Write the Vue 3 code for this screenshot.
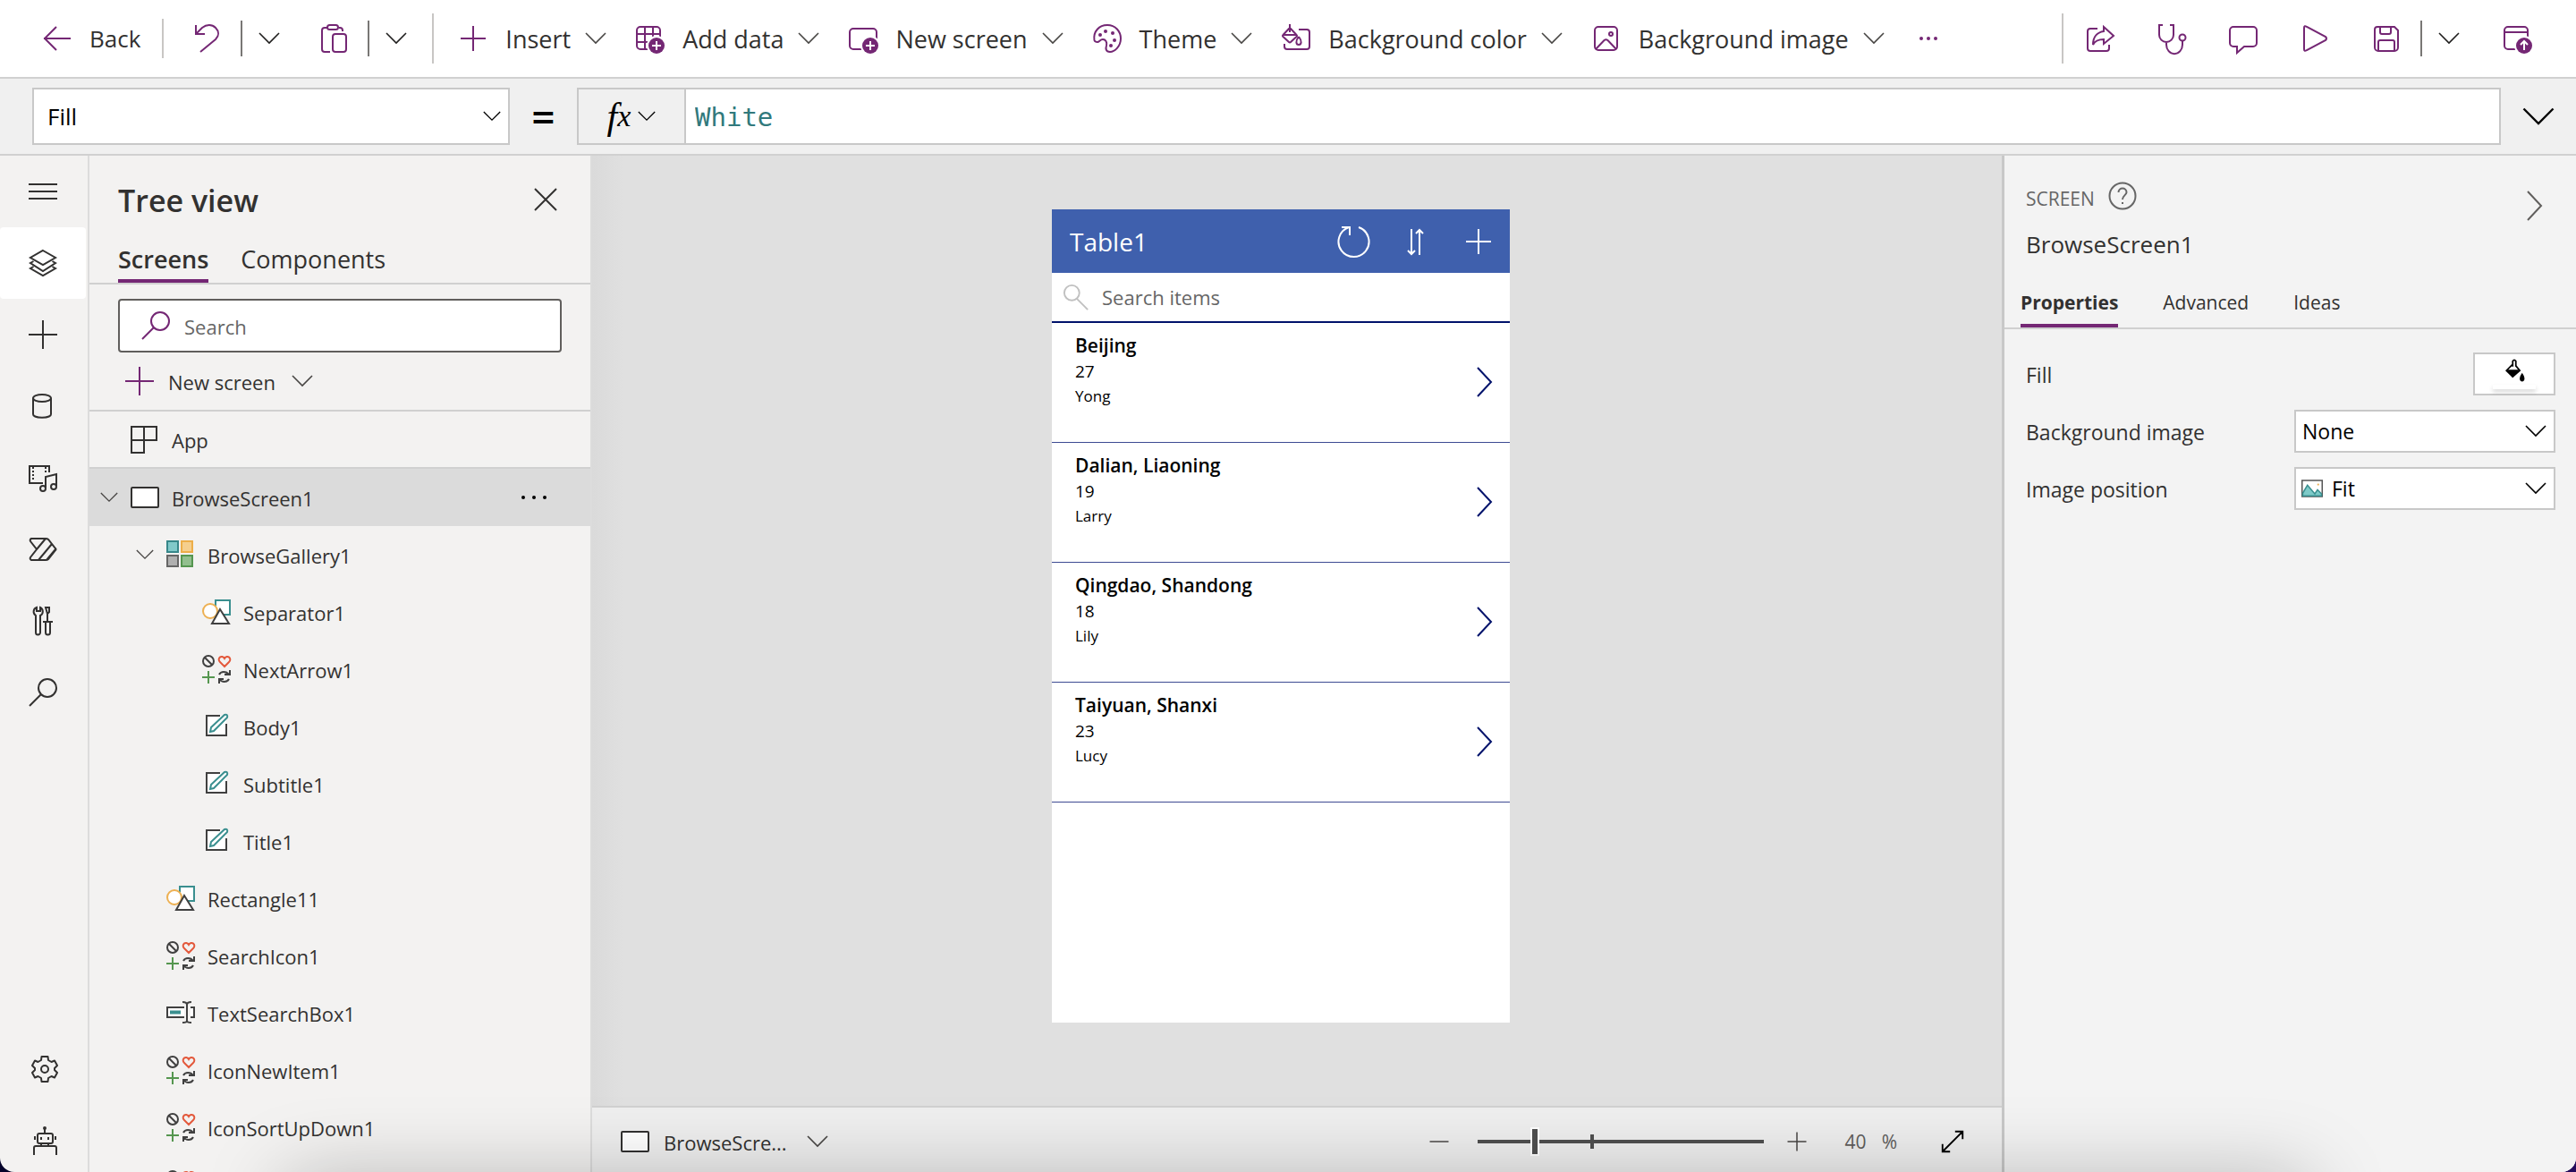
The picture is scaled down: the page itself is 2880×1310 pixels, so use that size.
<script setup>
import { h, ref } from 'vue'

const badge = '<circle cx="23" cy="24" r="11" fill="#fff" stroke="none"/><circle cx="23" cy="24" r="9" fill="#742774" stroke="none"/>'
const badgePlus = badge + '<path d="M23 19v10M18 24h10" stroke="#fff"/>'

const glyphs = {
  back: '<path d="M1 16H31M15 3 2 16 15 29"/>',
  undo: '<path d="M4 1V11H14M4 11 11 4C16 0 22 0 26 4C30 8 30 13 26 17L9 31"/>',
  paste: '<path d="M10 4H6a3 3 0 0 0-3 3V28a3 3 0 0 0 3 3h6M22 4h1a3 3 0 0 1 3 3v1"/><rect x="9" y="1" width="12" height="5" rx="2.5"/><rect x="15" y="11" width="15" height="20" rx="3"/>',
  plus: '<path d="M16 2V30M2 16H30"/>',
  bigPlus: '<path d="M16 0V32M0 16H32"/>',
  addData: '<rect x="1" y="3" width="26" height="25" rx="4"/><path d="M10 3V28M19 3V28M1 11H27M1 20H27"/>' + badgePlus,
  newScreen: '<rect x="1" y="5" width="30" height="23" rx="4"/><g transform="translate(1 0)">' + badgePlus + '</g>',
  theme: '<path d="M1.500 18C0 8 7 1 16 1C25 1 31 8 31 16C31 25 24 31 19 31C14 31 14 27 15 24C16 20 14 17 11 17C8 17 7 20 5 20C3 20 2 19.500 1.500 18Z"/><g fill="currentColor" stroke="none"><circle cx="8" cy="12" r="2"/><circle cx="14" cy="8" r="2"/><circle cx="22" cy="10" r="2"/><circle cx="24" cy="18" r="2"/><circle cx="20" cy="24" r="2"/></g>',
  bgColor: '<path d="M19 6H28a3 3 0 0 1 3 3V25a3 3 0 0 1-3 3H6a3 3 0 0 1-3-3V22M9 0V9M9 4 1.500 12q-1 1 0 2L8 20q1 1 2 0l6.500-6q1-1 0-2ZM1 12H17M19 14c4 5 3 9 0 9s-4-4 0-9"/>',
  image: '<rect x="3" y="3" width="25" height="26" rx="4"/><circle cx="21" cy="11" r="2"/><path d="M4 28 13.500 18q2-1.500 4 0L27 28"/>',
  more: '<g fill="currentColor" stroke="none"><circle cx="8" cy="16" r="2"/><circle cx="16" cy="16" r="2"/><circle cx="24" cy="16" r="2"/></g>',
  share: '<path d="M13 5H5a3 3 0 0 0-3 3V27a3 3 0 0 0 3 3H23a3 3 0 0 0 3-3V23M20 3 31 13 20 22V17C14 17 10 19 8 23C8 14 13 9 20 8Z"/>',
  stethoscope: '<path d="M6 1H2V12a8 8 0 0 0 16 0V1H14M10 20v3a8 9 0 0 0 18 0V19"/><circle cx="28" cy="15" r="3.500"/>',
  comment: '<path d="M5 3H27a4 4 0 0 1 4 4V21a4 4 0 0 1-4 4H17L9 32V25H5a4 4 0 0 1-4-4V7a4 4 0 0 1 4-4Z"/>',
  play: '<path d="M4 4V28q0 3 3 1L28 18q2-2 0-4L7 3Q4 1 4 4Z"/>',
  save: '<path d="M6 3H25l4 4V26a4 4 0 0 1-4 4H7a4 4 0 0 1-4-4V6a3 3 0 0 1 3-3ZM9 3V9a2 2 0 0 0 2 2h8a2 2 0 0 0 2-2V3M7 30V20a2 2 0 0 1 2-2H23a2 2 0 0 1 2 2V30"/>',
  publish: '<path d="M28 15V7a4 4 0 0 0-4-4H6a4 4 0 0 0-4 4V24a4 4 0 0 0 4 4h9M2 9H28"/><g transform="translate(1 0)">' + badge + '<path d="M23 29V20M19 23l4-4 4 4" stroke="#fff"/></g>',
  menu: '<path d="M0 8H32M0 16H32M0 24H32"/>',
  layers: '<path d="M16 2 30 10 16 18 2 10ZM5.500 14 2 16 16 25 30 16 26.500 14M5.500 20 2 22 16 30 30 22 26.500 20"/>',
  database: '<ellipse cx="15" cy="7" rx="10" ry="4"/><path d="M5 7V25c0 5 20 5 20 0V7"/>',
  media: '<path d="M16 22H1V3H23V10M19 27V15L31 12V25"/><path d="M5 4V20M19 4V12" stroke-dasharray="2 2"/><circle cx="16" cy="28" r="3"/><circle cx="28" cy="26" r="3"/>',
  automate: '<path d="M3 4H19q2 0 3 1L30 15q1 1 0 2L22 27q-1 1-3 1H3q-2-1-1-3L9 16 2 7Q1 5 3 4ZM9 16 19 4M11 28 26 10M20 28 30 16"/>',
  tools: '<path d="M9 1A5 5 0 0 0 8 10V29a2.500 2.500 0 0 0 5 0V10A5 5 0 0 0 13 1V5H9ZM19 1H23V6L21 8ZM21 7V17M16 17H27M19 17V29a2.500 2.500 0 0 0 5 0V17"/>',
  search: '<circle cx="21" cy="11" r="10"/><path d="M14 18 1 31"/>',
  gear: '<circle cx="18" cy="16" r="4"/><path d="M14.500 2H21.500L22 6 25.500 8 29 6.500 32 12 29 15V17L32 20 29 25.500 25.500 24 22 26 21.500 30H14.500L14 26 10.500 24 7 25.500 4 20 7 17V15L4 12 7 6.500 10.500 8 14 6Z" stroke-linejoin="round"/>',
  robot: '<rect x="10" y="8" width="17" height="11" rx="2"/><path d="M18 2V8M7 11V15M30 11V15M14 19V22M22 19V22M6 32V24q0-2 2-2H29q2 0 2 2V32"/><circle cx="18" cy="2" r="1"/><path d="M14 12v3M22 12v3"/>',
  app: '<path d="M1 2H29V17H15V31H1ZM1 17H15V2"/>',
  screen: '<rect x="1" y="5" width="30" height="22" rx="1" fill="#fff"/>',
  gallery: '<rect x="1" y="1" width="12" height="12" fill="#81c9ca" stroke="#37878a"/><rect x="17" y="1" width="12" height="12" fill="#f5cf8e" stroke="#edae49"/><rect x="1" y="17" width="12" height="12" fill="#b0b0b0" stroke="#666"/><rect x="17" y="17" width="12" height="12" fill="#92bf8e" stroke="#55964f"/>',
  shapes: '<rect x="15" y="3" width="16" height="16" fill="#fff" stroke="#3a8f8f"/><circle cx="9" cy="15" r="8" fill="#fff" stroke="#edb052"/><path d="M20 13 30 29H11Z" fill="#fff" stroke="#404040"/>',
  icons: '<g stroke="#404040"><circle cx="7" cy="7" r="6"/><path d="M3 3 11 11M19 22c2-4 8-4 11 0M31 17V22H25M30 27c-2 4-8 4-11 0M19 32V27H24"/></g><path d="M25 13 20 8C16 4 22 -1 25 4C28 -1 34 4 30 8Z" stroke="#e3593c"/><path d="M7 18V32M0 25H14" stroke="#55964f"/>',
  edit: '<path d="M5 4H27V26H5Z" fill="#fff" stroke="none"/><path d="M27 13V26H5V4H20" stroke="#404040"/><path d="M9 22 10 17 25 3Q29 2 28 6L13 21Z" fill="#fff" stroke="#3a8f8f"/>',
  textBox: '<path d="M20 10H1V21H20M27 10H31V21H27" fill="#fff" stroke="#404040"/><path d="M4 15.500H16" stroke="#3a8f8f" stroke-width="4"/><path d="M18 4Q23 4 23 7V25Q23 27 18 27M28 4Q23 4 23 7M23 25Q23 27 28 27" stroke="#404040"/>',
  close: '<path d="M4 3 28 27M28 3 4 27"/>',
  help: '<circle cx="16" cy="16" r="14.500"/><path d="M11.500 12C11.500 6 20.500 6 20.500 12C20.500 15 16 15.500 16 20M16 23V25"/>',
  refresh: '<path d="M22 0A17 17 0 1 1 11 0M3 0H12V9"/>',
  sort: '<path d="M11 2V30M7 26 11 30 15 26M20 31V3M16 7 20 3 24 7"/>',
  searchThin: '<circle cx="11" cy="11" r="9"/><path d="M17 18 30 31"/>',
  bucket: '<path d="M14 10V3q2-3 4 0V10M14 7 6 15 14 23 23 15 18 9"/><path d="M6 14H23L14 24Z" fill="currentColor" stroke="none"/><path d="M26 18c5 7 3 11 0 11s-5-4 0-11Z" fill="currentColor" stroke="none"/>',
  picture: '<rect x="1" y="4" width="30" height="24" fill="#fff" stroke="#555"/><path d="M2 23 9 11 20 24 24 18 30 24V27H2Z" fill="#7ecac8" stroke="#3a8f8f"/><circle cx="25" cy="10" r="1.500" fill="#edb052" stroke="none"/>',
  expand: '<path d="M4 28 28 4M19 4H28V13M4 19V28H13"/>',
  minus: '<path d="M2 16H30"/>'
}

const Icon = (props) =>
  h('svg', {
    viewBox: '0 0 32 32',
    fill: 'none',
    stroke: 'currentColor',
    'stroke-width': 2,
    'aria-hidden': 'true',
    class: 'icon',
    innerHTML: glyphs[props.name]
  })
Icon.props = ['name']

const Chevron = () =>
  h('svg', {
    viewBox: '0 0 24 14',
    fill: 'none',
    stroke: 'currentColor',
    'stroke-width': 1.6,
    'aria-hidden': 'true',
    class: 'chevron',
    innerHTML: '<path d="M1 1 12 12 23 1"/>'
  })

const commands = [
  { icon: 'plus', label: 'Insert' },
  { icon: 'addData', label: 'Add data' },
  { icon: 'newScreen', label: 'New screen' },
  { icon: 'theme', label: 'Theme' },
  { icon: 'bgColor', label: 'Background color' },
  { icon: 'image', label: 'Background image' }
]
const appActions = ['share', 'stethoscope', 'comment', 'play', 'save']
const rail = ['menu', 'layers', 'bigPlus', 'database', 'media', 'automate', 'tools', 'search']

const tree = [
  { label: 'App', icon: 'app', level: 0, ruled: true },
  { label: 'BrowseScreen1', icon: 'screen', level: 0, open: true, selected: true },
  { label: 'BrowseGallery1', icon: 'gallery', level: 1, open: true },
  { label: 'Separator1', icon: 'shapes', level: 2 },
  { label: 'NextArrow1', icon: 'icons', level: 2 },
  { label: 'Body1', icon: 'edit', level: 2 },
  { label: 'Subtitle1', icon: 'edit', level: 2 },
  { label: 'Title1', icon: 'edit', level: 2 },
  { label: 'Rectangle11', icon: 'shapes', level: 1 },
  { label: 'SearchIcon1', icon: 'icons', level: 1 },
  { label: 'TextSearchBox1', icon: 'textBox', level: 1 },
  { label: 'IconNewItem1', icon: 'icons', level: 1 },
  { label: 'IconSortUpDown1', icon: 'icons', level: 1 },
  { label: '', icon: 'icons', level: 1 }
]

const records = [
  { title: 'Beijing', subtitle: '27', body: 'Yong' },
  { title: 'Dalian, Liaoning', subtitle: '19', body: 'Larry' },
  { title: 'Qingdao, Shandong', subtitle: '18', body: 'Lily' },
  { title: 'Taiyuan, Shanxi', subtitle: '23', body: 'Lucy' }
]

const formula = ref('White')
const zoom = ref(19)
</script>

<template>
  <div class="studio">
    <header class="toolbar">
      <button class="cmd back"><Icon name="back" /><span>Back</span></button>
      <i class="rule short"></i>
      <button class="tool" aria-label="Undo"><Icon name="undo" /></button>
      <i class="rule split"></i>
      <button class="tool" aria-label="Undo options"><Chevron /></button>
      <button class="tool paste" aria-label="Paste"><Icon name="paste" /></button>
      <i class="rule split"></i>
      <button class="tool" aria-label="Paste options"><Chevron /></button>
      <i class="rule tall"></i>
      <nav class="commands">
        <button v-for="c in commands" :key="c.label" class="cmd">
          <Icon :name="c.icon" /><span>{{ c.label }}</span><Chevron />
        </button>
        <button class="tool" aria-label="More commands"><Icon name="more" /></button>
      </nav>
      <div class="app-actions">
        <i class="rule tall"></i>
        <button v-for="a in appActions" :key="a" class="tool" :aria-label="a"><Icon :name="a" /></button>
        <i class="rule split"></i>
        <button class="tool" aria-label="Save options"><Chevron /></button>
        <button class="tool publish" aria-label="Publish"><Icon name="publish" /></button>
      </div>
    </header>

    <section class="formula-bar">
      <div class="select property">
        <select aria-label="Property"><option>Fill</option></select>
        <Chevron />
      </div>
      <span class="equals">=</span>
      <div class="formula">
        <button class="fx" aria-label="Functions"><span class="f">f</span><span class="x">x</span><Chevron /></button>
        <input v-model="formula" aria-label="Formula" spellcheck="false" />
      </div>
      <button class="expand" aria-label="Expand formula bar"><Chevron /></button>
    </section>

    <main class="workspace">
      <nav class="rail">
        <button v-for="r in rail" :key="r" :class="{ active: r === 'layers' }" :aria-label="r"><Icon :name="r" /></button>
        <div class="rail-foot">
          <button aria-label="Settings"><Icon name="gear" /></button>
          <button aria-label="Virtual agent"><Icon name="robot" /></button>
        </div>
      </nav>

      <aside class="tree">
        <div class="tree-head">
          <h2>Tree view</h2>
          <button aria-label="Close"><Icon name="close" /></button>
        </div>
        <div class="tabs tree-tabs">
          <button class="on">Screens</button>
          <button>Components</button>
        </div>
        <label class="tree-search">
          <Icon name="search" />
          <input type="search" placeholder="Search" aria-label="Search the tree" />
        </label>
        <button class="new-screen"><Icon name="bigPlus" /><span>New screen</span><Chevron /></button>
        <ul>
          <li
            v-for="(n, i) in tree"
            :key="i"
            :class="['level-' + n.level, { selected: n.selected, ruled: n.ruled }]"
          >
            <span class="twisty"><Chevron v-if="n.open" /></span>
            <Icon :name="n.icon" />
            <span class="name">{{ n.label }}</span>
            <button v-if="n.selected" class="dots" aria-label="More actions"><i></i><i></i><i></i></button>
          </li>
        </ul>
      </aside>

      <section class="stage">
        <div class="canvas">
          <article class="phone">
            <header>
              <h1>Table1</h1>
              <button aria-label="Refresh"><Icon name="refresh" /></button>
              <button aria-label="Sort"><Icon name="sort" /></button>
              <button aria-label="New item"><Icon name="plus" /></button>
            </header>
            <label class="item-search">
              <Icon name="searchThin" />
              <input type="text" placeholder="Search items" aria-label="Search items" />
            </label>
            <div v-for="r in records" :key="r.title" class="record">
              <div>
                <h3>{{ r.title }}</h3>
                <p class="subtitle">{{ r.subtitle }}</p>
                <p class="body">{{ r.body }}</p>
              </div>
              <svg viewBox="0 0 18 34" fill="none" stroke="currentColor" stroke-width="2" aria-hidden="true">
                <path d="M1 1 16 17 1 33" />
              </svg>
            </div>
          </article>
        </div>
        <footer class="status">
          <button class="screen-pick"><Icon name="screen" /><span>BrowseScre...</span><Chevron /></button>
          <div class="zoom">
            <button aria-label="Zoom out"><Icon name="minus" /></button>
            <input v-model="zoom" type="range" min="0" max="100" aria-label="Zoom" />
            <button aria-label="Zoom in"><Icon name="plus" /></button>
            <span class="percent"><span>40</span><span>%</span></span>
            <button class="fit" aria-label="Fit to window"><Icon name="expand" /></button>
          </div>
        </footer>
      </section>

      <aside class="props">
        <div class="props-head">
          <div>
            <p class="kind">SCREEN <Icon name="help" /></p>
            <h2>BrowseScreen1</h2>
          </div>
          <button aria-label="Collapse panel">
            <svg viewBox="0 0 18 34" fill="none" stroke="currentColor" stroke-width="2" aria-hidden="true">
              <path d="M1 1 16 17 1 33" />
            </svg>
          </button>
        </div>
        <div class="tabs props-tabs">
          <button class="on">Properties</button>
          <button>Advanced</button>
          <button>Ideas</button>
        </div>
        <div class="fields">
          <div class="field">
            <label for="fill">Fill</label>
            <button id="fill" class="swatch"><Icon name="bucket" /><i></i></button>
          </div>
          <div class="field">
            <label for="bg">Background image</label>
            <div class="select"><select id="bg"><option>None</option></select><Chevron /></div>
          </div>
          <div class="field">
            <label for="pos">Image position</label>
            <div class="select pictured">
              <Icon name="picture" /><select id="pos"><option>Fit</option></select><Chevron />
            </div>
          </div>
        </div>
      </aside>
    </main>
    <div class="dock-shadow"></div>
  </div>
</template>

<style>
html {
  background: linear-gradient(90deg, #04022a, #240c5c);
}
body {
  margin: 0;
}
</style>

<style scoped>
.studio {
  position: relative;
  display: flex;
  flex-direction: column;
  height: 100vh;
  overflow: hidden;
  border-radius: 0 0 16px 16px;
  background: #f3f2f1;
  color: #323130;
  font-family: "Open Sans", "Noto Sans", sans-serif;
  font-size: 22px;
}
.studio *,
.studio :deep(svg) {
  box-sizing: border-box;
}
button,
input,
select {
  margin: 0;
  padding: 0;
  border: 0;
  background: none;
  color: inherit;
  font: inherit;
  outline: 0;
}
button {
  display: flex;
  align-items: center;
}
h1,
h2,
h3,
p,
ul {
  margin: 0;
  padding: 0;
  font-weight: 400;
}
.icon {
  flex: none;
  width: 32px;
  height: 32px;
  overflow: visible;
}
.chevron {
  flex: none;
  width: 24px;
  height: 14px;
  overflow: visible;
  color: #484644;
}

/* Toolbar */
.toolbar {
  display: flex;
  flex: none;
  align-items: center;
  height: 88px;
  padding: 0 50px 0 48px;
  border-bottom: 2px solid #d0d0d0;
  background: #fff;
  font-size: 26px;
}
.toolbar .icon {
  color: #742774;
}
.toolbar .tool .chevron {
  color: #201f1e;
}
.cmd .chevron {
  margin-left: 16px;
}
.cmd .icon {
  margin-right: 20px;
}
.rule {
  flex: none;
  width: 2px;
  background: #c8c6c4;
}
.rule.short {
  height: 44px;
  margin: 0 32px 0 24px;
}
.rule.split {
  height: 40px;
  margin: 0 18px 0 22px;
  background: #797775;
}
.rule.tall {
  height: 56px;
  margin: 0 28px 0 28px;
}
.paste {
  margin-left: 44px;
}
.commands {
  display: flex;
  gap: 33px;
  font-size: 27px;
}
.app-actions {
  display: flex;
  align-items: center;
  margin-left: auto;
}
.app-actions .rule.tall {
  margin: 0 25px 0 0;
}
.app-actions .tool + .tool {
  margin-left: 48px;
}

/* Formula bar */
.formula-bar {
  display: flex;
  flex: none;
  align-items: center;
  height: 86px;
  padding-left: 36px;
  border-bottom: 2px solid #d0d0d0;
  background: #f0f0f0;
}
.select {
  display: grid;
  align-items: center;
  border: 2px solid #c8c8c8;
  background: #fff;
  color: #000;
}
.select > * {
  grid-area: 1 / 1;
}
.select select {
  width: 100%;
  height: 100%;
  padding: 0 40px 0 7px;
  appearance: none;
}
.select .chevron {
  justify-self: end;
  margin-right: 8px;
  color: #000;
  pointer-events: none;
}
.property {
  flex: none;
  width: 534px;
  height: 64px;
  font-size: 26px;
}
.property select {
  padding-left: 15px;
}
.property .chevron {
  width: 20px;
}
.equals {
  flex: none;
  width: 75px;
  color: #000;
  font-size: 46px;
  font-weight: 600;
  line-height: 64px;
  text-align: center;
}
.formula {
  display: flex;
  flex: 1;
  height: 64px;
  border: 2px solid #c8c8c8;
}
.fx {
  flex: none;
  justify-content: center;
  width: 120px;
  border-right: 2px solid #c8c8c8;
  color: #000;
  font-family: "Liberation Serif", serif;
  font-style: italic;
  line-height: 48px;
}
.fx .f {
  font-size: 42px;
}
.fx .x {
  font-size: 34px;
}
.fx .chevron {
  width: 20px;
  margin-left: 8px;
  color: #000;
}
.formula input {
  flex: 1;
  min-width: 0;
  padding: 2px 0 0 10px;
  background: #fff;
  color: #31797c;
  font-family: "DejaVu Sans Mono", monospace;
  font-size: 29px;
}
.expand {
  flex: none;
  justify-content: center;
  width: 84px;
}
.expand .chevron {
  width: 36px;
  height: 21px;
  color: #000;
}

/* Workspace */
.workspace {
  display: flex;
  flex: 1;
  min-height: 0;
}
.rail {
  display: flex;
  flex: none;
  flex-direction: column;
  width: 100px;
  padding-right: 2px;
  border-right: 2px solid #dcdcdc;
}
.rail button {
  flex: none;
  justify-content: center;
  height: 80px;
  border-radius: 4px;
}
.rail .active {
  background: #fff;
}
.rail-foot {
  margin-top: auto;
  padding-bottom: 11px;
}
.rail-foot button {
  width: 100%;
  height: 48px;
}
.rail-foot button + button {
  margin-top: 32px;
}

.tree {
  display: flex;
  flex: none;
  flex-direction: column;
  width: 562px;
  border-right: 2px solid #dcdcdc;
}
.tree-head {
  display: flex;
  align-items: center;
  justify-content: space-between;
  padding: 26px 34px 24px 32px;
}
.tree-head h2 {
  font-size: 34px;
  font-weight: 600;
  line-height: 48px;
}
.tabs {
  display: flex;
  border-bottom: 2px solid #d0d0d0;
}
.tabs button {
  border-bottom: 4px solid transparent;
}
.tabs .on {
  border-color: #742774;
}
.tree-tabs {
  gap: 36px;
  padding-left: 32px;
  font-size: 27px;
  line-height: 36px;
}
.tree-tabs button {
  padding-bottom: 4px;
}
.tree-tabs .on {
  font-weight: 600;
}
.tree-search {
  display: flex;
  align-items: center;
  gap: 16px;
  height: 60px;
  margin: 16px 32px 0;
  padding-left: 24px;
  border: 2px solid #605e5c;
  border-radius: 4px;
  background: #fff;
}
.tree-search .icon,
.new-screen .icon {
  color: #742774;
}
.tree-search input {
  flex: 1;
  min-width: 0;
  padding-top: 2px;
  font-size: 22px;
}
input::placeholder {
  color: #666;
  opacity: 1;
}
.new-screen {
  flex: none;
  height: 66px;
  padding-left: 40px;
  border-bottom: 2px solid #d0d0d0;
  font-size: 22px;
}
.new-screen span {
  margin: 0 18px 0 16px;
  padding-top: 2px;
}
.tree ul {
  flex: 1;
  min-height: 0;
  overflow: hidden;
  list-style: none;
}
.tree li {
  display: flex;
  align-items: center;
  height: 64px;
  padding-right: 49px;
}
.tree li .icon {
  margin-right: 14px;
}
.level-0 {
  padding-left: 12px;
}
.level-1 {
  padding-left: 52px;
}
.level-2 {
  padding-left: 92px;
}
.twisty {
  display: flex;
  flex: none;
  width: 34px;
}
.twisty .chevron {
  width: 20px;
}
.ruled {
  border-bottom: 2px solid #d0d0d0;
}
.selected {
  background: #dbdbdb;
}
.name {
  flex: 1;
  padding-top: 2px;
}
.dots {
  gap: 8px;
}
.dots i {
  width: 4px;
  height: 4px;
  border-radius: 50%;
  background: #000;
}

/* Canvas */
.stage {
  display: flex;
  flex: 1;
  flex-direction: column;
  min-width: 0;
}
.canvas {
  flex: 1;
  min-height: 0;
  padding: 60px 36px 93px 0;
  background: linear-gradient(90deg, #dadada, #e0e0e0 36px);
}
.phone {
  width: 512px;
  height: 100%;
  margin: 0 auto;
  background: #fff;
  color: #000;
}
.phone header {
  display: flex;
  align-items: center;
  height: 71px;
  padding: 0 19px 0 20px;
  background: #3f60ad;
  color: #fff;
}
.phone h1 {
  flex: 1;
  font-size: 28px;
}
.phone header button {
  margin-left: 38px;
}
.item-search {
  display: flex;
  align-items: center;
  gap: 14px;
  height: 56px;
  padding-left: 12px;
  border-bottom: 2px solid #00126b;
}
.item-search .icon {
  width: 30px;
  color: #c0c0c0;
}
.item-search input {
  flex: 1;
  min-width: 0;
}
.record {
  display: flex;
  align-items: center;
  justify-content: space-between;
  height: 134px;
  padding: 0 19px 28px 26px;
  border-bottom: 1px solid #3d4a92;
}
.record h3 {
  font-size: 21px;
  font-weight: 600;
  line-height: 30px;
}
.subtitle {
  font-size: 19px;
  line-height: 28px;
}
.body {
  font-size: 17px;
  line-height: 28px;
}
.record svg {
  width: 18px;
  height: 34px;
  margin-top: 26px;
  color: #00126b;
}

/* Status bar */
.status {
  display: flex;
  flex: none;
  align-items: center;
  justify-content: space-between;
  height: 74px;
  padding: 4px 40px 0 32px;
  border-top: 2px solid #d0d0d0;
  background: #efefef;
}
.screen-pick span {
  margin: 0 22px 0 16px;
  padding-top: 2px;
}
.zoom {
  display: flex;
  align-items: center;
  color: #484644;
}
.zoom .icon {
  width: 24px;
  height: 24px;
}
.zoom input {
  width: 320px;
  height: 30px;
  margin: 0 25px 0 31px;
  appearance: none;
  background:
    linear-gradient(#4f4f4f, #4f4f4f) 126px 50% / 4px 16px no-repeat,
    linear-gradient(#4f4f4f, #4f4f4f) 0 50% / 100% 4px no-repeat;
}
.zoom input::-webkit-slider-thumb {
  appearance: none;
  width: 10px;
  height: 32px;
  border: 2px solid #fff;
  background: #4f4f4f;
}
.percent {
  display: flex;
  gap: 17px;
  margin: 0 47px 0 42px;
  color: #605e5c;
  font-size: 21px;
}
.fit .icon {
  width: 30px;
  height: 30px;
  color: #000;
}

/* Properties */
.props {
  flex: none;
  width: 642px;
  border-left: 3px solid #c8c8c8;
  background: #f3f3f3;
}
.props-head {
  display: flex;
  align-items: flex-start;
  justify-content: space-between;
  padding: 29px 37px 27px 24px;
}
.kind {
  display: flex;
  align-items: flex-start;
  gap: 15px;
  height: 38px;
  color: #666;
  font-size: 21px;
  line-height: 38px;
}
.props-head h2 {
  margin-top: 10px;
  font-size: 26px;
  line-height: 44px;
}
.props-head button {
  padding-top: 10px;
  color: #605e5c;
}
.props-head button svg {
  width: 18px;
  height: 34px;
}
.props-tabs {
  gap: 50px;
  padding-left: 18px;
  font-size: 21px;
  line-height: 32px;
}
.props-tabs button {
  padding-bottom: 8px;
}
.props-tabs .on {
  font-weight: 700;
}
.fields {
  display: flex;
  flex-direction: column;
  gap: 16px;
  padding: 26px 23px 0 24px;
}
.field {
  display: flex;
  align-items: center;
  justify-content: space-between;
  height: 48px;
  font-size: 23px;
}
.field label {
  padding-top: 2px;
}
.field .select {
  width: 292px;
  height: 48px;
}
.pictured .icon {
  z-index: 1;
  width: 24px;
  margin-left: 6px;
  pointer-events: none;
}
.pictured select {
  padding-left: 40px;
}
.swatch {
  flex-direction: column;
  justify-content: space-between;
  width: 92px;
  height: 48px;
  padding: 5px 0;
  border: 2px solid #c8c8c8;
  background: #fff;
  color: #000;
}
.swatch .icon {
  width: 28px;
  height: 28px;
}
.swatch i {
  width: 48px;
  height: 5px;
  background: #fff;
  box-shadow: 0 3px 5px rgba(0, 0, 0, 0.16);
}

/* Soft shadow that the desktop dock throws over the lower edge */
.dock-shadow {
  position: absolute;
  top: 100%;
  right: 300px;
  left: 320px;
  height: 80px;
  box-shadow: 0 10px 90px rgba(0, 0, 0, 0.28);
  pointer-events: none;
}
</style>
